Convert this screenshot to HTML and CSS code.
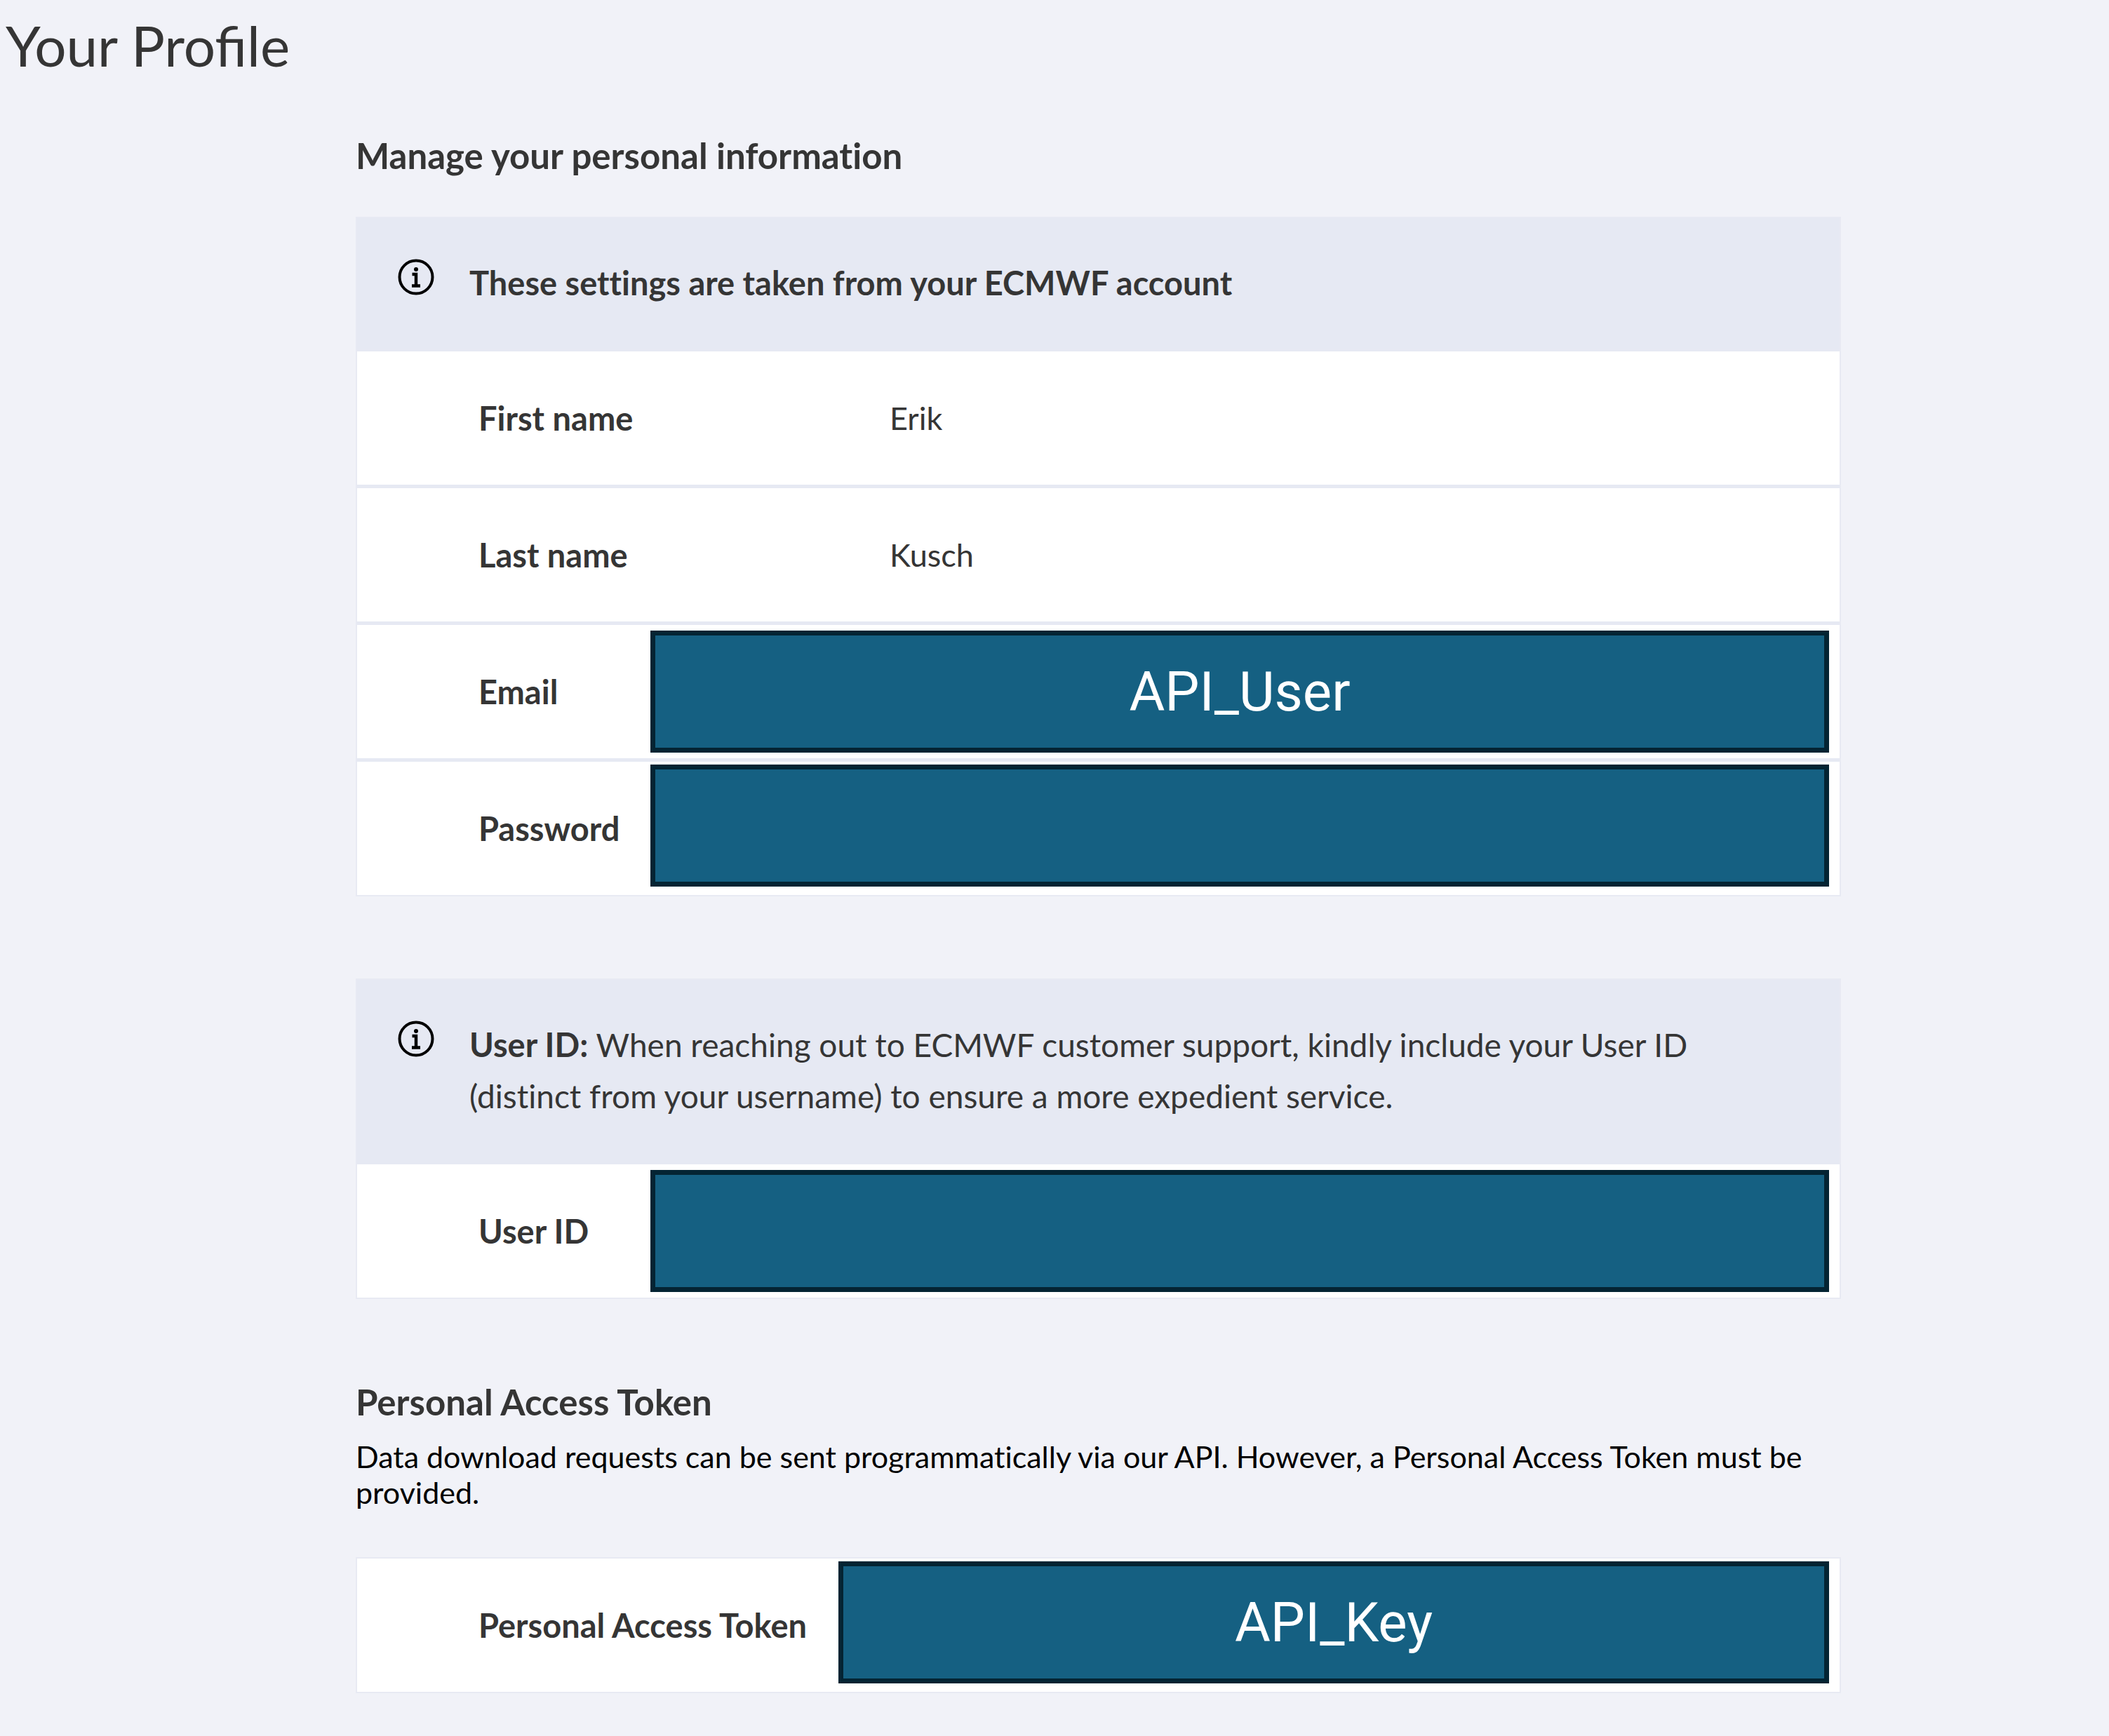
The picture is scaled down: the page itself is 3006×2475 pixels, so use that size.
FILE: index.html
```html
<!DOCTYPE html>
<html lang="en">
<head>
  <meta charset="utf-8">
  <meta name="viewport" content="width=device-width, initial-scale=1">
  <title>Your Profile</title>
  <link rel="stylesheet" href="styles.css">
</head>
<body>
  <header class="page-header">
    <h1 class="page-title">Your Profile</h1>
  </header>
  <main class="content">
    <section class="section">
      <h2 class="section-title">Manage your personal information</h2>
      <div class="card card--spaced">
        <div class="notice">
          <svg class="notice-icon" viewBox="0 0 52 52" aria-hidden="true">
            <circle cx="26" cy="26" r="23.5" fill="none" stroke="currentColor" stroke-width="4"/>
            <circle cx="26" cy="15" r="3" fill="currentColor"/>
            <path d="M20.500 22H26V38M20 38.500H32" fill="none" stroke="currentColor" stroke-width="4.500"/>
          </svg>
          <p class="notice-text"><strong>These settings are taken from your ECMWF account</strong></p>
        </div>
        <dl class="fields">
          <div class="field">
            <dt class="field-label">First name</dt>
            <dd class="field-value">Erik</dd>
          </div>
          <div class="field">
            <dt class="field-label">Last name</dt>
            <dd class="field-value">Kusch</dd>
          </div>
          <div class="field">
            <dt class="field-label">Email</dt>
            <dd class="mask">API_User</dd>
          </div>
          <div class="field">
            <dt class="field-label">Password</dt>
            <dd class="mask mask--high"></dd>
          </div>
        </dl>
      </div>
    </section>

    <section class="section">
      <div class="card">
        <div class="notice">
          <svg class="notice-icon" viewBox="0 0 52 52" aria-hidden="true">
            <circle cx="26" cy="26" r="23.5" fill="none" stroke="currentColor" stroke-width="4"/>
            <circle cx="26" cy="15" r="3" fill="currentColor"/>
            <path d="M20.500 22H26V38M20 38.500H32" fill="none" stroke="currentColor" stroke-width="4.500"/>
          </svg>
          <p class="notice-text"><strong>User ID:</strong> When reaching out to ECMWF customer support, kindly include your User ID (distinct from your username) to ensure a more expedient service.</p>
        </div>
        <dl class="fields">
          <div class="field">
            <dt class="field-label">User ID</dt>
            <dd class="mask"></dd>
          </div>
        </dl>
      </div>
    </section>

    <section class="section">
      <h2 class="section-title">Personal Access Token</h2>
      <p class="section-text">Data download requests can be sent programmatically via our API. However, a Personal Access Token must be provided.</p>
      <div class="card">
        <dl class="fields">
          <div class="field field--wide">
            <dt class="field-label">Personal Access Token</dt>
            <dd class="mask mask--high">API_Key</dd>
          </div>
        </dl>
      </div>
    </section>
  </main>
</body>
</html>
```

FILE: styles.css
```css
* {
  box-sizing: border-box;
}

body,
h1,
h2,
p,
dl,
dd {
  margin: 0;
}

body {
  background: #f1f2f8;
  color: #353535;
  font-family: Lato, "Open Sans", sans-serif;
  font-size: 47px;
}

.page-header {
  padding: 16px 8px 0;
}

.page-title {
  font-size: 80px;
  font-weight: 400;
  line-height: 96px;
}

.content {
  display: flex;
  flex-direction: column;
  gap: 117px;
  padding: 80px 382px 58px 507px;
  font-variant-ligatures: none;
}

.section-title {
  font-size: 51px;
  font-weight: 700;
  line-height: 60px;
}

.section-text {
  margin: 22px 0 67px;
  color: #000;
  font-size: 43px;
  line-height: 51px;
}

.card {
  border: 2px solid #e8eaf3;
  background: #fff;
}

.card--spaced {
  margin-top: 57px;
}

.notice {
  display: flex;
  gap: 50px;
  padding: 56px 60px 61px 58px;
  background: #e6e9f3;
}

.notice-icon {
  flex: none;
  width: 52px;
  height: 52px;
  margin-top: 2px;
  color: #000;
}

.notice-text {
  font-size: 46px;
  line-height: 73px;
}

.notice-text strong {
  font-size: 47px;
  line-height: 1;
}

.field {
  display: grid;
  grid-template-columns: 245px 1fr;
  align-items: center;
  height: 190px;
  padding: 0 15px 0 173px;
  box-sizing: content-box;
}

.field--wide {
  grid-template-columns: 513px 1fr;
}

.field + .field {
  border-top: 5px solid #e6e9f3;
}

.field-label {
  font-weight: 700;
  white-space: nowrap;
}

.field-value {
  padding-left: 341px;
  font-size: 45px;
}

.mask {
  display: flex;
  align-items: center;
  justify-content: center;
  align-self: start;
  height: 174px;
  margin-top: 8px;
  border: 7px solid #042433;
  background: #156082;
  color: #fff;
  font-family: Roboto, "Liberation Sans", sans-serif;
  font-size: 78px;
}

.mask--high {
  margin-top: 4px;
}
```
